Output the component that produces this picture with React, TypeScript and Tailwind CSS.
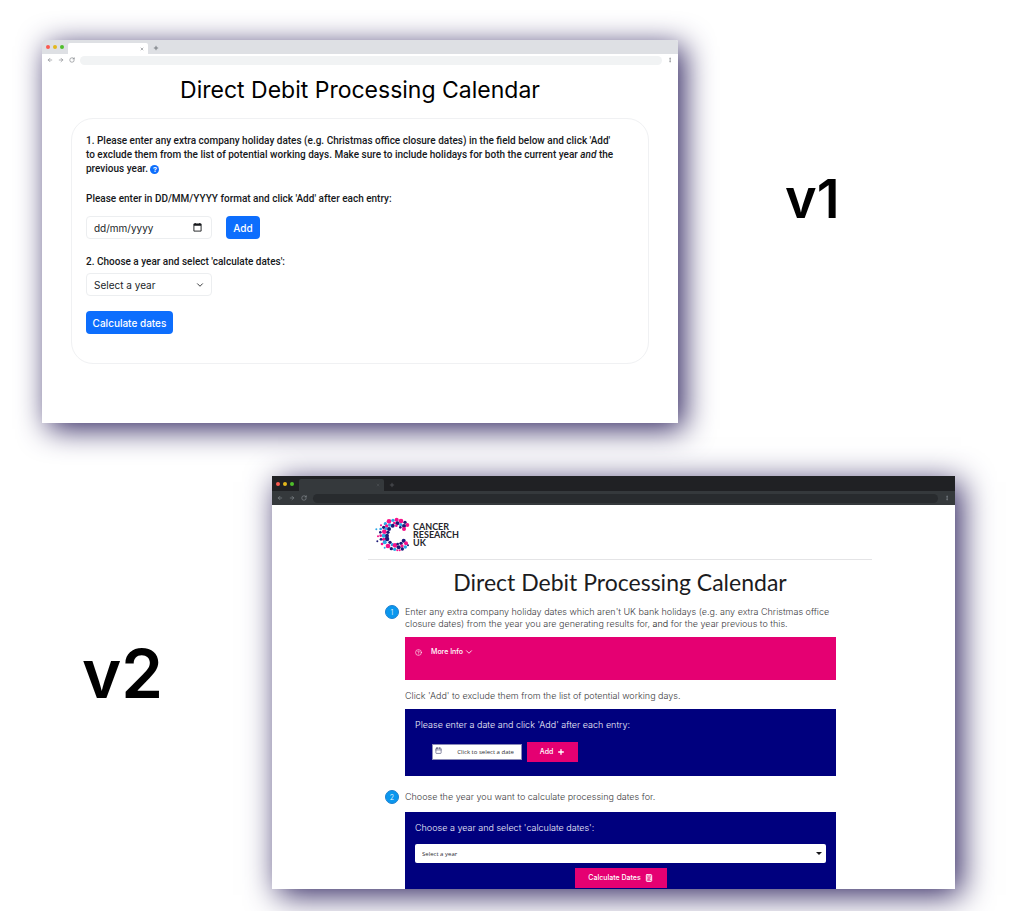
import type { ReactNode } from "react";
import {
  ArrowLeft,
  ArrowRight,
  Calendar,
  Calculator,
  ChevronDown,
  CircleHelp,
  EllipsisVertical,
  Plus,
  RotateCw,
  X,
} from "lucide-react";

const SHADOW = "shadow-[6px_6px_30px_#2d225e]";

function Lights() {
  return (
    <div className="flex gap-[3px] self-center pl-1">
      <span className="size-1 rounded-full bg-[#fb5a50]" />
      <span className="size-1 rounded-full bg-[#e3b71c]" />
      <span className="size-1 rounded-full bg-[#4fbe2b]" />
    </div>
  );
}

function BrowserWindow({ dark = false, children }: { dark?: boolean; children: ReactNode }) {
  return (
    <div className={`bg-white ${SHADOW} ${dark ? "" : "rounded-t-[2px]"}`}>
      <div
        className={
          dark
            ? "flex h-[15px] items-end bg-[#202124] text-[#55595d]"
            : "flex h-[14px] items-end rounded-t-[2px] bg-[#dee0e4] text-[#5f6368]"
        }
      >
        <Lights />
        <div
          className={
            dark
              ? "ml-[5px] flex h-3 w-[85px] items-center justify-end rounded-t-[2px] bg-[#35393c] pr-1"
              : "ml-1 flex h-[11px] w-20 items-center justify-end rounded-t-[2px] bg-white pr-1"
          }
        >
          <X className="size-1" strokeWidth={3} />
        </div>
        <Plus className="mb-[3px] ml-[5px] size-[6px]" strokeWidth={3} />
      </div>
      <div
        className={
          dark
            ? "flex h-[14px] items-center gap-[6px] bg-[#35393c] pr-[5px] pl-[5px] text-[#9aa0a6]"
            : "flex h-3 items-center gap-[5px] pr-[5px] pl-[5px] text-[#5f6368]"
        }
      >
        <ArrowLeft className="size-[6px]" strokeWidth={2} />
        <ArrowRight className="size-[6px]" strokeWidth={2} />
        <RotateCw className="size-[6px]" strokeWidth={2} />
        <div className={dark ? "h-[9px] grow rounded-full bg-[#282b2e]" : "h-[9px] grow rounded-full bg-[#f1f3f4]"} />
        <EllipsisVertical className="size-[6px]" strokeWidth={2} />
      </div>
      {children}
    </div>
  );
}

const PINK = "#f5128a";
const NAVY = "#1d1a78";
const SKY = "#2ba6e6";

const DOTS: [number, number, number, string][] = [
  [386, 184, 7, PINK], [398, 181, 5, SKY], [409, 179, 6, PINK], [422, 183, 7, PINK], [434, 187, 5, NAVY], [441, 195, 6, PINK],
  [411, 190, 6, NAVY], [402, 189, 4, PINK], [421, 194, 5, SKY], [431, 198, 6, NAVY], [431, 207, 6, PINK], [420, 202, 4, NAVY],
  [375, 191, 5, SKY], [397, 197, 6, NAVY], [388, 195, 5, SKY], [379, 198, 5, PINK], [370, 202, 5, NAVY], [362, 196, 3, PINK],
  [386, 207, 6, NAVY], [372, 215, 7, PINK], [377, 206, 4, SKY], [408, 197, 4, PINK], [361, 207, 4, SKY], [348, 208, 3, SKY],
  [383, 217, 5, NAVY], [360, 217, 4, NAVY], [370, 227, 6, SKY], [380, 227, 6, NAVY], [361, 227, 4, PINK], [353, 229, 3, PINK],
  [380, 237, 7, NAVY], [370, 238, 5, PINK], [362, 238, 4, NAVY], [351, 244, 3, NAVY], [373, 247, 6, SKY], [365, 252, 4, PINK],
  [389, 247, 5, NAVY], [383, 258, 7, PINK], [396, 254, 5, SKY], [404, 256, 7, PINK], [373, 263, 3, SKY], [393, 266, 5, NAVY],
  [403, 268, 5, SKY], [412, 252, 4, NAVY], [415, 262, 6, NAVY], [411, 271, 3, PINK], [422, 250, 5, NAVY], [425, 258, 5, PINK],
  [430, 242, 6, NAVY], [437, 250, 6, PINK], [426, 267, 5, NAVY], [435, 261, 5, SKY], [443, 256, 3, NAVY], [418, 271, 3, PINK],
];

function Logo() {
  return (
    <div className="flex items-center gap-[3px]">
      <svg viewBox="344 172 105 103" className="size-[35px]" aria-hidden="true">
        {DOTS.map(([cx, cy, r, fill], i) => (
          <circle key={i} cx={cx} cy={cy} r={r} fill={fill} />
        ))}
      </svg>
      <div className="font-['Lato',sans-serif] text-[9px] leading-[8px] font-bold text-[#26262c]">
        CANCER
        <br />
        RESEARCH
        <br />
        UK
      </div>
    </div>
  );
}

function VersionOne() {
  return (
    <BrowserWindow>
      <main className="px-[29px] pt-[10px] pb-[59px] font-['Roboto',sans-serif] text-[10px] leading-[14px] font-medium text-[#16181b]">
        <h1 className="text-center font-['Inter',sans-serif] text-[23px] leading-7 font-normal text-black">
          Direct Debit Processing Calendar
        </h1>
        <section className="mt-[14px] rounded-[22px] border border-[#f0f1f3] px-[14px] pt-[15px] pb-[29px]">
          <p className="pr-4">
            1. Please enter any extra company holiday dates (e.g. Christmas office closure dates) in the field below and
            click 'Add' to exclude them from the list of potential working days. Make sure to include holidays for both
            the current year <em>and</em> the previous year.{" "}
            <button
              type="button"
              aria-label="Help"
              className="inline-flex size-[9px] items-center justify-center rounded-full bg-[#0d6efd] align-text-bottom text-[8px] leading-none font-bold text-white"
            >
              ?
            </button>
          </p>
          <label htmlFor="holiday" className="mt-4 block">
            Please enter in DD/MM/YYYY format and click 'Add' after each entry:
          </label>
          <div className="mt-[10px] flex gap-[14px] font-['Inter',sans-serif]">
            <div className="flex h-[23px] w-[126px] items-center rounded-[4px] border border-[#eceef0] px-[7px]">
              <input
                id="holiday"
                type="text"
                placeholder="dd/mm/yyyy"
                className="w-0 grow font-normal outline-none placeholder:text-[#212529]"
              />
              <svg viewBox="0 0 10 10" className="mr-[2px] size-[9px]" aria-hidden="true">
                <path d="M1 1h8v8H1z" fill="none" stroke="#16181b" />
                <path d="M1 1h8v2H1zM2 0h1v1H2zM7 0h1v1H7z" fill="#16181b" stroke="none" />
              </svg>
            </div>
            <button type="button" className="h-[23px] w-[34px] rounded-[4px] bg-[#0d6efd] text-white">
              Add
            </button>
          </div>
          <label htmlFor="year-one" className="mt-4 block">
            2. Choose a year and select 'calculate dates':
          </label>
          <div className="mt-1 grid w-[126px] items-center font-['Inter',sans-serif]">
            <select
              id="year-one"
              className="col-start-1 row-start-1 h-[23px] appearance-none rounded-[4px] border border-[#eceef0] px-[7px] font-normal text-[#212529]"
            >
              <option>Select a year</option>
            </select>
            <ChevronDown
              className="pointer-events-none col-start-1 row-start-1 mr-[7px] size-[10px] justify-self-end"
              strokeWidth={2}
            />
          </div>
          <button
            type="button"
            className="mt-[15px] block h-[23px] w-[87px] rounded-[4px] bg-[#0d6efd] font-['Inter',sans-serif] text-white"
          >
            Calculate dates
          </button>
        </section>
      </main>
    </BrowserWindow>
  );
}

function Step({ n, children }: { n: number; children: ReactNode }) {
  return (
    <div className="flex items-start gap-[6px] pl-[17px]">
      <span className="flex size-[14px] shrink-0 items-center justify-center rounded-full border border-[#1c7fd0] bg-[#0a97ee] text-[7px] leading-none text-white">
        {n}
      </span>
      <p className="pt-px pr-9">{children}</p>
    </div>
  );
}

function VersionTwo() {
  return (
    <BrowserWindow dark>
      <main className="pr-[83px] pl-24 font-['Inter',sans-serif] text-[9px] leading-3 font-light text-[#3c3c42]">
        <header className="border-b border-[#e4e4e6] pt-3 pb-[7px] pl-[7px]">
          <Logo />
        </header>
        <h1 className="pt-2 text-center font-['Lato',sans-serif] text-[23px] leading-7 font-normal text-[#1c1c1e]">
          Direct Debit Processing Calendar
        </h1>
        <div className="mt-[9px]">
          <Step n={1}>
            Enter any extra company holiday dates which aren't UK bank holidays (e.g. any extra Christmas office closure
            dates) from the year you are generating results for, <span className="text-[#1c1c20]">and</span> for the year
            previous to this.
          </Step>
        </div>
        <div className="mt-[7px] mr-9 ml-[37px] h-[43px] bg-[#e50072] px-[10px] pt-[9px]">
          <button type="button" className="flex items-center text-[7px] leading-3 font-medium text-white">
            <CircleHelp className="mr-[9px] size-[7px]" strokeWidth={2} />
            More Info
            <ChevronDown className="ml-px size-[10px]" strokeWidth={2} />
          </button>
        </div>
        <p className="mt-[10px] pl-[37px]">Click 'Add' to exclude them from the list of potential working days.</p>
        <section className="mt-[7px] mr-9 ml-[37px] bg-[#00007e] px-[10px] pt-[10px] pb-[14px] text-[#f1f1fc]">
          <label htmlFor="pick" className="block">
            Please enter a date and click 'Add' after each entry:
          </label>
          <div className="mt-[11px] flex items-center gap-[5px] pl-[17px]">
            <div className="flex h-4 w-[90px] items-center border border-[#8a8ab8] bg-white px-[2px] text-[#3a3a66]">
              <Calendar className="mb-1 size-[7px]" strokeWidth={2} />
              <input
                id="pick"
                type="text"
                placeholder="Click to select a date"
                className="w-0 grow pr-[5px] text-right font-['Open_Sans',sans-serif] text-[6px] font-normal outline-none placeholder:text-[#2d2d33]"
              />
            </div>
            <button
              type="button"
              className="flex h-5 w-[51px] items-center justify-center gap-1 bg-[#e50072] text-[7px] font-medium text-white"
            >
              Add <Plus className="size-2" strokeWidth={4} />
            </button>
          </div>
        </section>
        <div className="mt-[14px]">
          <Step n={2}>Choose the year you want to calculate processing dates for.</Step>
        </div>
        <section className="mt-2 mr-9 ml-[37px] bg-[#00007e] px-[10px] pt-[10px] pb-px text-[#f1f1fc]">
          <label htmlFor="year-two" className="block">
            Choose a year and select 'calculate dates':
          </label>
          <div className="mt-[10px] grid items-center">
            <select
              id="year-two"
              className="col-start-1 row-start-1 h-[19px] appearance-none rounded-[2px] bg-white px-[7px] font-['Open_Sans',sans-serif] text-[6px] font-normal text-[#2d2d33]"
            >
              <option>Select a year</option>
            </select>
            <svg
              viewBox="0 0 6 3"
              className="pointer-events-none col-start-1 row-start-1 mr-1 h-[3px] w-[6px] justify-self-end"
              aria-hidden="true"
            >
              <path d="M0 0h6L3 3z" fill="#16161a" />
            </svg>
          </div>
          <button
            type="button"
            className="mx-auto mt-[5px] flex h-5 w-[92px] items-center justify-center gap-1 bg-[#e50072] text-[7px] font-medium text-white"
          >
            Calculate Dates <Calculator className="size-2" strokeWidth={3} />
          </button>
        </section>
      </main>
    </BrowserWindow>
  );
}

export default function App() {
  return (
    <div className="min-h-screen bg-white pt-10 pb-[22px] font-['Inter',sans-serif] text-black">
      <div className="grid grid-cols-[636fr_333fr] items-start pl-[42px]">
        <VersionOne />
        <div className="pt-[125px] pl-[107px] text-[54px] leading-[68px] font-semibold">v1</div>
      </div>
      <div className="mt-[53px] grid grid-cols-[272fr_683fr] items-start pr-14">
        <div className="pt-[158px] pl-[82px] text-[67px] leading-[80px] font-semibold">v2</div>
        <VersionTwo />
      </div>
    </div>
  );
}
